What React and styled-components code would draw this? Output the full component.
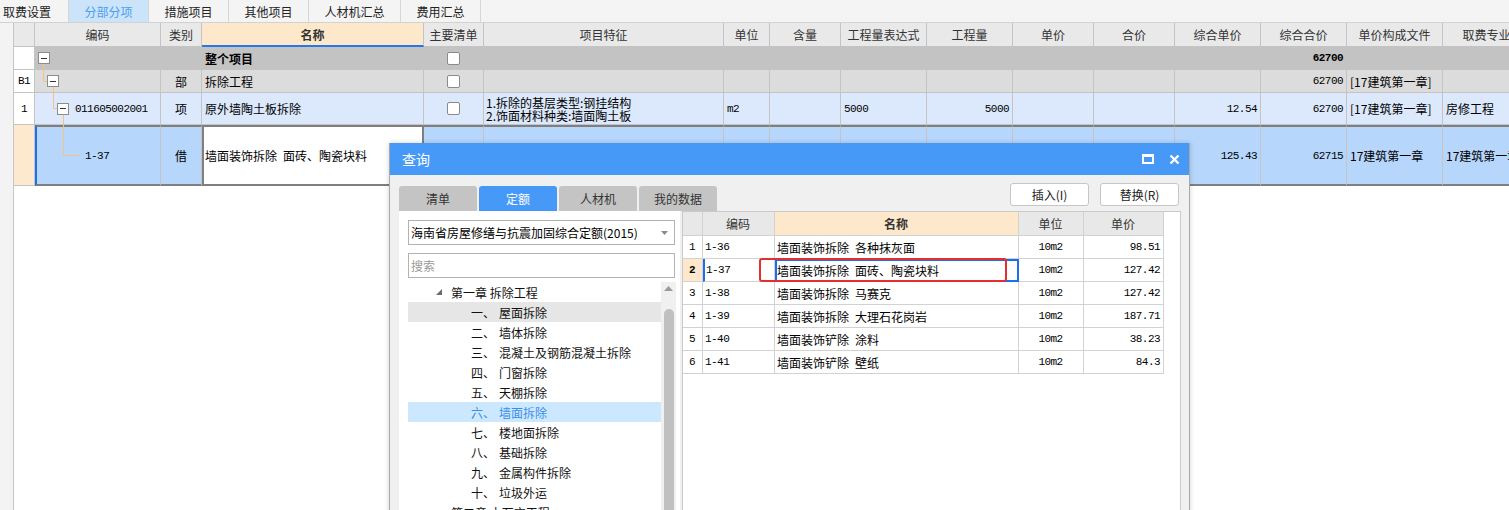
import styled, { createGlobalStyle } from "styled-components";

const CJK = `"Noto Sans CJK SC", "Noto Sans", sans-serif`;
const MONO = `"Liberation Mono", "Noto Sans CJK SC", monospace`;

const GlobalStyle = createGlobalStyle`
  html, body { margin: 0; padding: 0; background: #fff; }
  body { font-family: ${CJK}; font-size: 12px; color: #000; }
`;

const Page = styled.div`
  position: relative;
  width: 1509px;
  height: 510px;
  overflow: hidden;
  display: flex;
  flex-direction: column;
  background: #fff;
`;

// 상단 탭
const TopTabs = styled.div`
  display: flex;
  height: 22px;
  flex-shrink: 0;
  background: #f4f4f4;
  border-bottom: 1px solid #d2d2d2;
`;

const TopTab = styled.div`
  box-sizing: border-box;
  width: ${p => p.$w}px;
  display: flex;
  align-items: center;
  justify-content: ${p => (p.$first ? "flex-start" : "center")};
  padding-left: ${p => (p.$first ? 3 : 0)}px;
  border-right: 1px solid #d6d6d6;
  background: ${p => (p.$active ? "#cce4f9" : "transparent")};
  color: ${p => (p.$active ? "#4a9ff0" : "#222")};
  font-size: 12px;
`;

const Body = styled.div`
  flex: 1;
  display: flex;
  min-height: 0;
`;

const LeftStrip = styled.div`
  width: 13px;
  flex-shrink: 0;
  background: #f3f3f3;
  border-right: 1px solid #c6c6c6;
`;

const GridArea = styled.div`
  flex: 1;
  overflow: hidden;
  background: #fff;
`;

const COLS = "21px 126px 41px 222px 60px 240px 46px 71px 86px 86px 81px 81px 86px 86px 96px 88px";

const Row = styled.div`
  display: grid;
  grid-template-columns: ${COLS};
  height: ${p => p.$h}px;
  width: max-content;
`;

const Cell = styled.div`
  box-sizing: border-box;
  position: relative;
  display: flex;
  align-items: center;
  justify-content: ${p =>
    p.$align === "right" ? "flex-end" : p.$align === "center" ? "center" : "flex-start"};
  padding: 0 3px;
  border-right: 1px solid #c4c4c4;
  border-bottom: 1px solid #c4c4c4;
  background: ${p => p.$bg || "transparent"};
  font-family: ${p => (p.$mono ? MONO : CJK)};
  font-size: ${p => (p.$mono ? 11 : 12)}px;
  letter-spacing: ${p => (p.$mono ? "-0.55px" : "0")};
  font-weight: ${p => (p.$bold ? 700 : 400)};
  color: ${p => p.$color || "#000"};
  white-space: nowrap;
  overflow: ${p => (p.$visible ? "visible" : "hidden")};
  ${p => p.$current && `border-top: 2px solid #7f7f7f; border-bottom: 2px solid #7f7f7f;`}
  ${p => p.$edge && `border-left: 2px solid #1e6ff0;`}
  ${p => p.$editing && `border-left: 2px solid #7f7f7f; border-right: 2px solid #7f7f7f; padding-left: 1px;`}
`;

const HeadCell = styled(Cell)`
  background: ${p => (p.$hot ? "#fde8cb" : "#e9e9e9")};
  color: #333;
  justify-content: center;
  font-weight: ${p => (p.$hot ? 700 : 400)};
  ${p => p.$hot && `border-bottom: 2px solid #2777e8;`}
`;

const TwoLines = styled.div`
  line-height: 13px;
  font-size: 12px;
  padding-top: 1px;
`;

const Check = styled.span`
  box-sizing: border-box;
  width: 13px;
  height: 13px;
  background: #fff;
  border: 1px solid #8a8a8a;
  border-radius: 2px;
`;

const FoldBox = styled.span`
  box-sizing: border-box;
  position: relative;
  z-index: 1;
  flex-shrink: 0;
  width: 12px;
  height: 12px;
  margin-left: ${p => p.$indent}px;
  background: #fff;
  border: 1px solid #8c8c8c;
  display: flex;
  align-items: center;
  justify-content: center;
  &::after {
    content: "";
    width: 6px;
    height: 1px;
    background: #333;
  }
`;

const CodeText = styled.span`
  position: relative;
  z-index: 1;
  margin-left: ${p => p.$indent}px;
  font-family: ${MONO};
  font-size: 11px;
  letter-spacing: -0.55px;
`;

const LineSvg = styled.svg`
  position: absolute;
  left: 0;
  top: 0;
  overflow: visible;
  pointer-events: none;
`;

const TreeLines = ({ d }) => (
  <LineSvg width="10" height="10">
    <path d={d} stroke="#f6c27f" strokeWidth="1" fill="none" />
  </LineSvg>
);

// 조회 대화상자
const Dialog = styled.div`
  position: absolute;
  left: 389px;
  top: 143px;
  width: 801px;
  height: 400px;
  box-sizing: border-box;
  border: 1px solid #a9a9a9;
  border-top: none;
  background: #f0f0f0;
  box-shadow: 0 0 5px rgba(0, 0, 0, 0.18);
  display: flex;
  flex-direction: column;
`;

const TitleBar = styled.div`
  height: 32px;
  flex-shrink: 0;
  background: #4799f7;
  display: flex;
  align-items: center;
  justify-content: space-between;
  padding: 0 9px 0 12px;
  color: #fff;
  font-size: 14px;
`;

const TitleIcons = styled.div`
  display: flex;
  align-items: center;
  gap: 15px;
`;

const DialogBody = styled.div`
  flex: 1;
  display: flex;
  flex-direction: column;
  padding: 0 8px 0 9px;
  min-height: 0;
`;

const DialogHead = styled.div`
  height: 36px;
  display: flex;
  justify-content: space-between;
  flex-shrink: 0;
`;

const Tabs = styled.div`
  display: flex;
  align-self: flex-end;
  gap: 2px;
`;

const Tab = styled.div`
  width: 78px;
  height: 25px;
  border-radius: 3px 3px 0 0;
  display: flex;
  align-items: center;
  justify-content: center;
  background: ${p => (p.$active ? "#4799f7" : "#c4c4c4")};
  color: ${p => (p.$active ? "#fff" : "#333")};
  font-size: 12px;
`;

const Buttons = styled.div`
  display: flex;
  gap: 11px;
  margin-top: 8px;
  margin-right: 2px;
`;

const Button = styled.div`
  box-sizing: border-box;
  width: 79px;
  height: 23px;
  background: #fff;
  border: 1px solid #c6c6c6;
  border-radius: 3px;
  display: flex;
  align-items: center;
  justify-content: center;
  font-size: 12px;
  color: #222;
`;

const Panels = styled.div`
  flex: 1;
  display: flex;
  gap: 2px;
  min-height: 0;
`;

const LeftPanel = styled.div`
  width: 281px;
  box-sizing: border-box;
  background: #fff;
  padding: 9px 4px 0 9px;
  display: flex;
  flex-direction: column;
`;

const Field = styled.div`
  box-sizing: border-box;
  width: 267px;
  height: 25px;
  border: 1px solid #b2b2b2;
  display: flex;
  align-items: center;
  justify-content: space-between;
  padding: 0 6px 0 2px;
  font-size: 12px;
  color: ${p => (p.$placeholder ? "#9a9a9a" : "#000")};
  margin-bottom: ${p => p.$gap || 0}px;
  flex-shrink: 0;
`;

const TreeBox = styled.div`
  flex: 1;
  display: flex;
  margin-top: 4px;
  min-height: 0;
`;

const TreeList = styled.div`
  flex: 1;
`;

const TreeRow = styled.div`
  height: 20px;
  display: flex;
  align-items: center;
  padding-left: ${p => p.$pad}px;
  background: ${p => (p.$selected ? "#cce8ff" : p.$hover ? "#e6e6e6" : "transparent")};
  color: ${p => (p.$selected ? "#3b8ee8" : "#111")};
  font-size: 12px;
  white-space: nowrap;
`;

const TreeNum = styled.span`
  width: 28px;
`;

const Caret = styled.svg`
  margin-right: 9px;
`;

const ScrollBar = styled.div`
  width: 15px;
  background: #f0f0f0;
  display: flex;
  flex-direction: column;
  align-items: center;
  padding-top: 4px;
  box-sizing: border-box;
`;

const Thumb = styled.div`
  width: 10px;
  flex: 1;
  margin-top: 18px;
  border-radius: 5px 5px 0 0;
  background: #c0c0c0;
`;

const RightPanel = styled.div`
  flex: 1;
  position: relative;
  box-sizing: border-box;
  background: #fff;
  border: 1px solid #cacaca;
`;

const QCOLS = "20px 72px 244px 65px 80px";

const QRow = styled.div`
  display: grid;
  grid-template-columns: ${QCOLS};
  height: ${p => p.$h}px;
  width: max-content;
`;

const QCell = styled.div`
  box-sizing: border-box;
  display: flex;
  align-items: center;
  justify-content: ${p =>
    p.$align === "right" ? "flex-end" : p.$align === "center" ? "center" : "flex-start"};
  padding: 0 3px 0 2px;
  border-right: 1px solid #d2d2d2;
  border-bottom: 1px solid #d2d2d2;
  background: ${p => p.$bg || "#fff"};
  font-family: ${p => (p.$mono ? MONO : CJK)};
  font-size: ${p => (p.$mono ? 11 : 12)}px;
  letter-spacing: ${p => (p.$mono ? "-0.55px" : "0")};
  font-weight: ${p => (p.$bold ? 700 : 400)};
  color: ${p => p.$color || "#000"};
  white-space: nowrap;
  ${p => p.$edge && `border-left: 2px solid #1a6ef0; padding-left: 1px;`}
  ${p => p.$focus && `border: 2px solid #1a6ef0; padding-left: 0;`}
`;

const QHead = styled(QCell)`
  background: ${p => (p.$hot ? "#fde8cb" : "#e8e8e8")};
  justify-content: center;
  color: #333;
  font-family: ${CJK};
  font-size: 12px;
  letter-spacing: 0;
  font-weight: ${p => (p.$hot ? 700 : 400)};
`;

const Mark = styled.div`
  position: absolute;
  left: 76px;
  top: 46px;
  width: 248px;
  height: 24px;
  box-sizing: border-box;
  border: 2px solid #e3302f;
  border-radius: 3px;
`;

const SP = "\u2002";

const TOP_TABS = [
  ["取费设置", 69],
  ["分部分项", 80],
  ["措施项目", 80],
  ["其他项目", 80],
  ["人材机汇总", 92],
  ["费用汇总", 80],
];

const HEADERS = ["", "编码", "类别", "名称", "主要清单", "项目特征", "单位", "含量", "工程量表达式", "工程量", "单价", "合价", "综合单价", "综合合价", "单价构成文件", "取费专业"];

const TREE = [
  ["一、", "屋面拆除"],
  ["二、", "墙体拆除"],
  ["三、", "混凝土及钢筋混凝土拆除"],
  ["四、", "门窗拆除"],
  ["五、", "天棚拆除"],
  ["六、", "墙面拆除"],
  ["七、", "楼地面拆除"],
  ["八、", "基础拆除"],
  ["九、", "金属构件拆除"],
  ["十、", "垃圾外运"],
];

const QUOTAS = [
  ["1-36", `墙面装饰拆除${SP}各种抹灰面`, "98.51"],
  ["1-37", `墙面装饰拆除${SP}面砖、陶瓷块料`, "127.42"],
  ["1-38", `墙面装饰拆除${SP}马赛克`, "127.42"],
  ["1-39", `墙面装饰拆除${SP}大理石花岗岩`, "187.71"],
  ["1-40", `墙面装饰铲除${SP}涂料`, "38.23"],
  ["1-41", `墙面装饰铲除${SP}壁纸`, "84.3"],
];

const Empty = ({ n, bg, current }) =>
  Array.from({ length: n }).map((_, i) => <Cell key={i} $bg={bg} $current={current} />);

const App = () => {
  const G0 = "#c3c3c3";
  const G1 = "#dcdcdc";
  const B0 = "#dce9fc";
  const B1 = "#b6d6fb";

  return (
    <Page>
      <GlobalStyle />
      <TopTabs>
        {TOP_TABS.map(([label, w], i) => (
          <TopTab key={label} $w={w} $first={i === 0} $active={i === 1}>
            {label}
          </TopTab>
        ))}
      </TopTabs>

      <Body>
        <LeftStrip />
        <GridArea>
          <Row $h={24}>
            {HEADERS.map((h, i) => (
              <HeadCell key={i} $hot={h === "名称"}>{h}</HeadCell>
            ))}
          </Row>

          <Row $h={23}>
            <Cell $bg="#fff" />
            <Cell $bg={G0} $visible>
              <TreeLines d="M8.5 16 V24" />
              <FoldBox $indent={0} />
            </Cell>
            <Cell $bg={G0} />
            <Cell $bg={G0} $bold>整个项目</Cell>
            <Cell $bg={G0} $align="center"><Check /></Cell>
            <Empty n={8} bg={G0} />
            <Cell $bg={G0} $align="right" $mono $bold>62700</Cell>
            <Cell $bg={G0} />
            <Cell $bg={G0} />
          </Row>

          <Row $h={23}>
            <Cell $bg="#fff" $align="center" $mono>B1</Cell>
            <Cell $bg={G1} $visible>
              <TreeLines d="M8.5 -1 V11.5 H12 M18.5 16 V24" />
              <FoldBox $indent={9} />
            </Cell>
            <Cell $bg={G1} $align="center">部</Cell>
            <Cell $bg={G1}>拆除工程</Cell>
            <Cell $bg={G1} $align="center"><Check /></Cell>
            <Empty n={8} bg={G1} />
            <Cell $bg={G1} $align="right" $mono>62700</Cell>
            <Cell $bg={G1}>[17建筑第一章]</Cell>
            <Cell $bg={G1} />
          </Row>

          <Row $h={32}>
            <Cell $bg="#fff" $align="center" $mono>1</Cell>
            <Cell $bg={B0} $visible>
              <TreeLines d="M18.5 -1 V15.5 H22 M28.5 21 V33" />
              <FoldBox $indent={19} />
              <CodeText $indent={6}>011605002001</CodeText>
            </Cell>
            <Cell $bg={B0} $align="center">项</Cell>
            <Cell $bg={B0}>原外墙陶土板拆除</Cell>
            <Cell $bg={B0} $align="center"><Check /></Cell>
            <Cell $bg={B0} style={{ paddingLeft: 2 }}>
              <TwoLines>
                1.拆除的基层类型:钢挂结构<br />2.饰面材料种类:墙面陶土板
              </TwoLines>
            </Cell>
            <Cell $bg={B0} $mono>m2</Cell>
            <Cell $bg={B0} />
            <Cell $bg={B0} $mono>5000</Cell>
            <Cell $bg={B0} $align="right" $mono>5000</Cell>
            <Cell $bg={B0} />
            <Cell $bg={B0} />
            <Cell $bg={B0} $align="right" $mono>12.54</Cell>
            <Cell $bg={B0} $align="right" $mono>62700</Cell>
            <Cell $bg={B0}>[17建筑第一章]</Cell>
            <Cell $bg={B0}>房修工程</Cell>
          </Row>

          <Row $h={61}>
            <Cell $bg="#fde9cd" />
            <Cell $bg={B1} $current $edge $visible>
              <TreeLines d="M26.5 -3 V28.5 H43" />
              <CodeText $indent={45}>1-37</CodeText>
            </Cell>
            <Cell $bg={B1} $current $align="center">借</Cell>
            <Cell $bg="#fff" $current $editing>{`墙面装饰拆除${SP}面砖、陶瓷块料`}</Cell>
            <Empty n={8} bg={B1} current />
            <Cell $bg={B1} $current $align="right" $mono>125.43</Cell>
            <Cell $bg={B1} $current $align="right" $mono>62715</Cell>
            <Cell $bg={B1} $current>17建筑第一章</Cell>
            <Cell $bg={B1} $current>17建筑第一章</Cell>
          </Row>
        </GridArea>
      </Body>

      <Dialog>
        <TitleBar>
          <span>查询</span>
          <TitleIcons>
            <svg width="12" height="10" viewBox="0 0 12 10">
              <rect x="1" y="1.5" width="10" height="7.5" fill="none" stroke="#fff" strokeWidth="2" />
              <rect x="0" y="0" width="12" height="3" fill="#fff" />
            </svg>
            <svg width="11" height="11" viewBox="0 0 11 11">
              <path d="M1.5 1.5 L9.5 9.5 M9.5 1.5 L1.5 9.5" stroke="#fff" strokeWidth="2.4" />
            </svg>
          </TitleIcons>
        </TitleBar>

        <DialogBody>
          <DialogHead>
            <Tabs>
              <Tab>清单</Tab>
              <Tab $active>定额</Tab>
              <Tab>人材机</Tab>
              <Tab>我的数据</Tab>
            </Tabs>
            <Buttons>
              <Button>插入(I)</Button>
              <Button>替换(R)</Button>
            </Buttons>
          </DialogHead>

          <Panels>
            <LeftPanel>
              <Field $gap={8}>
                <span>海南省房屋修缮与抗震加固综合定额(2015)</span>
                <svg width="7" height="4" viewBox="0 0 7 4">
                  <path d="M0 0 H7 L3.5 4 Z" fill="#8a8a8a" />
                </svg>
              </Field>
              <Field $placeholder>搜索</Field>
              <TreeBox>
                <TreeList>
                  <TreeRow $pad={28}>
                    <Caret width="6" height="6" viewBox="0 0 6 6">
                      <path d="M6 0 V6 H0 Z" fill="#6a6a6a" />
                    </Caret>
                    第一章 拆除工程
                  </TreeRow>
                  {TREE.map(([num, name], i) => (
                    <TreeRow key={num} $pad={63} $hover={i === 0} $selected={i === 5}>
                      <TreeNum>{num}</TreeNum>
                      {name}
                    </TreeRow>
                  ))}
                  <TreeRow $pad={43}>第二章 土石方工程</TreeRow>
                </TreeList>
                <ScrollBar>
                  <svg width="9" height="5" viewBox="0 0 9 5">
                    <path d="M0 5 L4.5 0 L9 5 Z" fill="#9a9a9a" />
                  </svg>
                  <Thumb />
                </ScrollBar>
              </TreeBox>
            </LeftPanel>

            <RightPanel>
              <QRow $h={24}>
                <QHead />
                <QHead>编码</QHead>
                <QHead $hot>名称</QHead>
                <QHead>单位</QHead>
                <QHead>单价</QHead>
              </QRow>
              {QUOTAS.map(([code, name, price], i) => {
                const sel = i === 1;
                return (
                  <QRow key={code} $h={23}>
                    <QCell $align="center" $mono $bg={sel ? "#fde8cb" : "#fff"} $bold={sel}>
                      {i + 1}
                    </QCell>
                    <QCell $mono $edge={sel}>{code}</QCell>
                    <QCell $focus={sel}>{name}</QCell>
                    <QCell $align="center" $mono>10m2</QCell>
                    <QCell $align="right" $mono>{price}</QCell>
                  </QRow>
                );
              })}
              <Mark />
            </RightPanel>
          </Panels>
        </DialogBody>
      </Dialog>
    </Page>
  );
};

export default App;
